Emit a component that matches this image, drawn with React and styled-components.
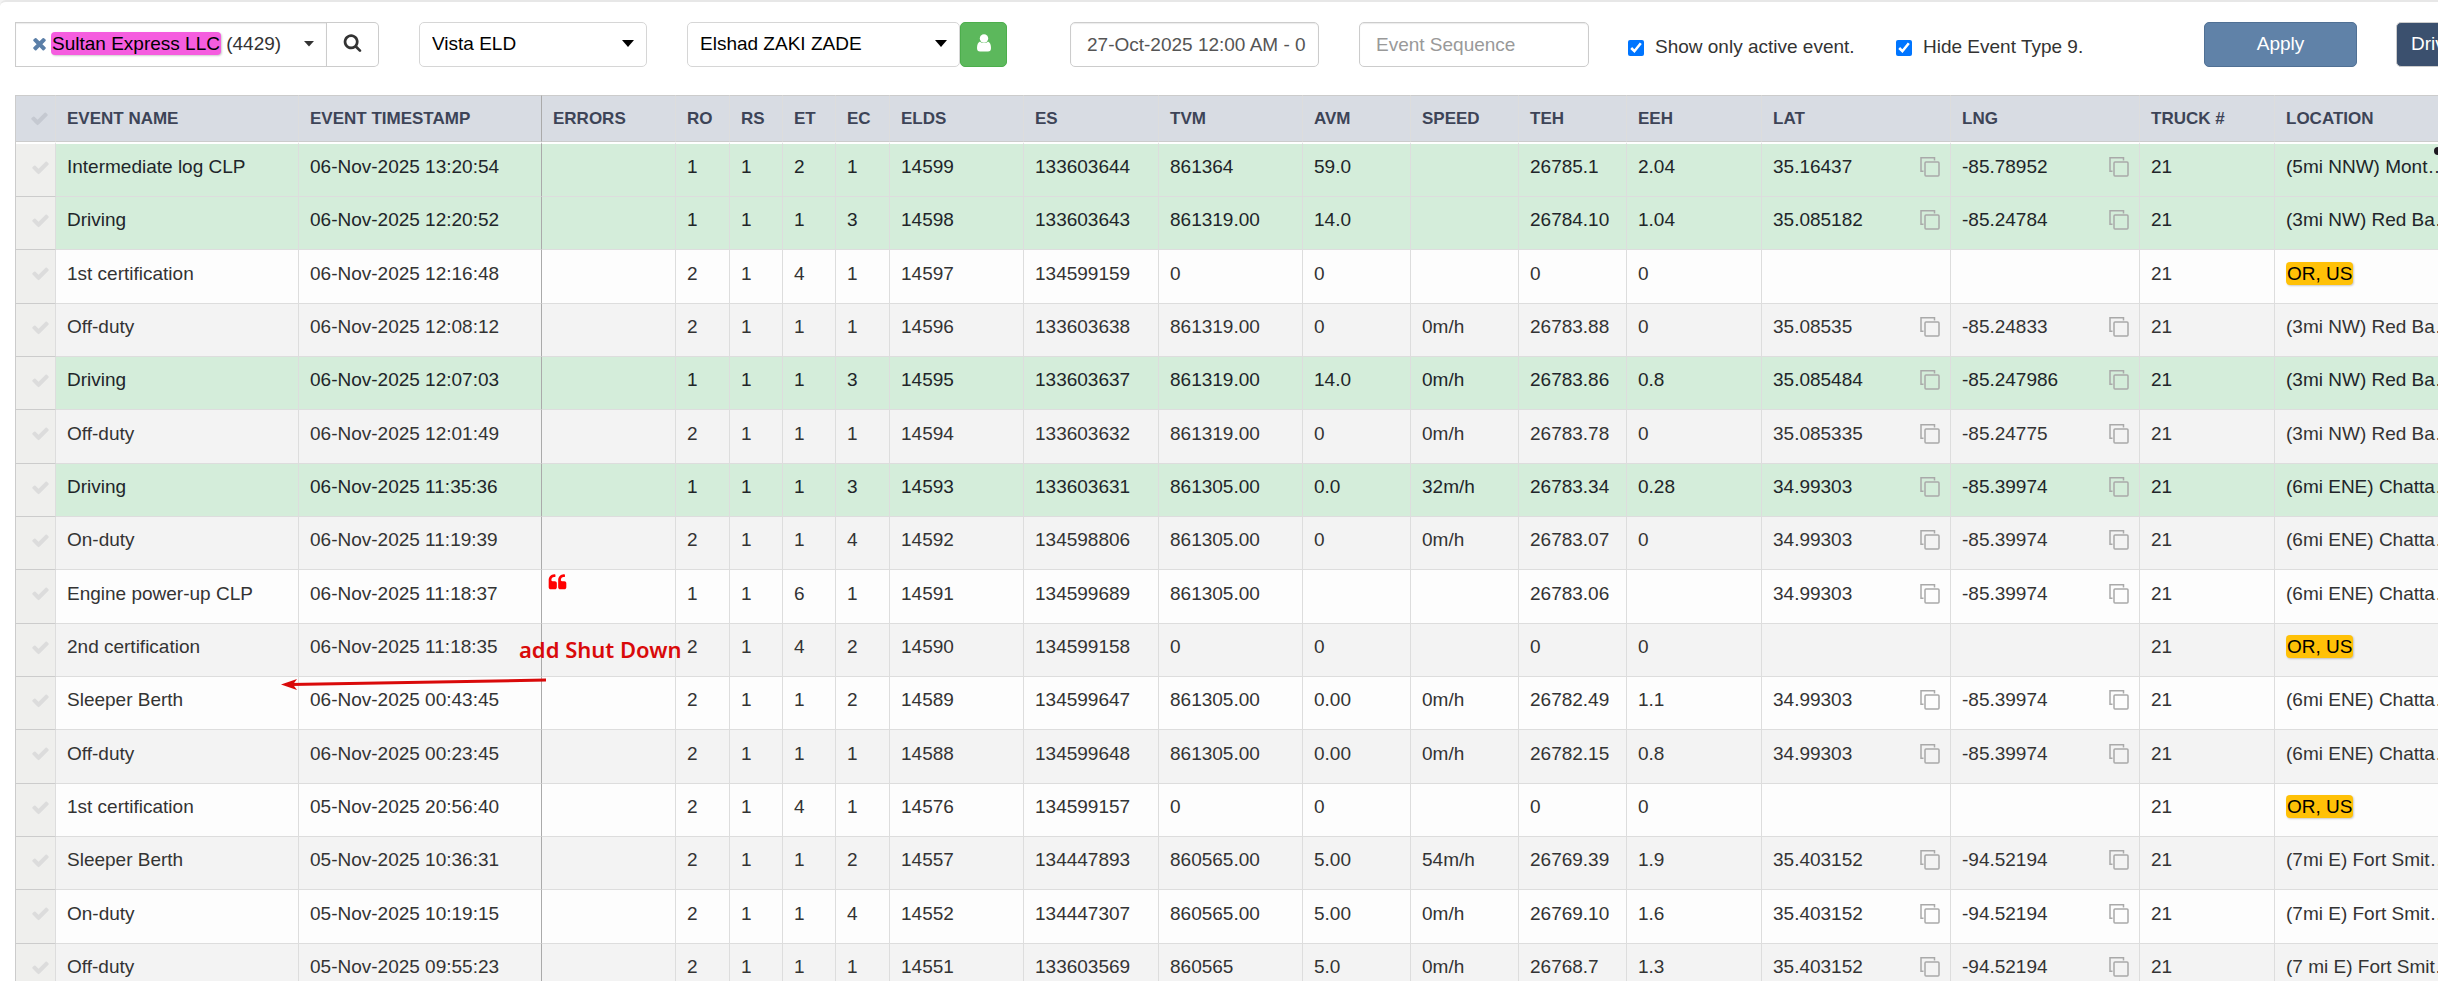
import React, { useState } from "react";
import styled, { createGlobalStyle, css } from "styled-components";

const columns = [
  { key: "name", label: "EVENT NAME", width: 243 },
  { key: "time", label: "EVENT TIMESTAMP", width: 243, divider: true },
  { key: "errors", label: "ERRORS", width: 134 },
  { key: "ro", label: "RO", width: 54 },
  { key: "rs", label: "RS", width: 53 },
  { key: "et", label: "ET", width: 53 },
  { key: "ec", label: "EC", width: 54 },
  { key: "elds", label: "ELDS", width: 134 },
  { key: "es", label: "ES", width: 135 },
  { key: "tvm", label: "TVM", width: 144 },
  { key: "avm", label: "AVM", width: 108 },
  { key: "speed", label: "SPEED", width: 108 },
  { key: "teh", label: "TEH", width: 108 },
  { key: "eeh", label: "EEH", width: 135 },
  { key: "lat", label: "LAT", width: 189, copy: true },
  { key: "lng", label: "LNG", width: 189, copy: true },
  { key: "truck", label: "TRUCK #", width: 135 },
  { key: "location", label: "LOCATION", width: 191 },
];

const CHATTANOOGA = "(6mi ENE) Chattanooga, TN";
const RED_BANK = "(3mi NW) Red Bank, TN";
const FORT_SMITH = "(7mi E) Fort Smith, AR";

const rows = [
  ["Intermediate log CLP", "06-Nov-2025 13:20:54", "", "1", "1", "2", "1", "14599", "133603644", "861364", "59.0", "", "26785.1", "2.04", "35.16437", "-85.78952", "21", "(5mi NNW) Monteagle, TN"],
  ["Driving", "06-Nov-2025 12:20:52", "", "1", "1", "1", "3", "14598", "133603643", "861319.00", "14.0", "", "26784.10", "1.04", "35.085182", "-85.24784", "21", RED_BANK],
  ["1st certification", "06-Nov-2025 12:16:48", "", "2", "1", "4", "1", "14597", "134599159", "0", "0", "", "0", "0", "", "", "21", "OR, US"],
  ["Off-duty", "06-Nov-2025 12:08:12", "", "2", "1", "1", "1", "14596", "133603638", "861319.00", "0", "0m/h", "26783.88", "0", "35.08535", "-85.24833", "21", RED_BANK],
  ["Driving", "06-Nov-2025 12:07:03", "", "1", "1", "1", "3", "14595", "133603637", "861319.00", "14.0", "0m/h", "26783.86", "0.8", "35.085484", "-85.247986", "21", RED_BANK],
  ["Off-duty", "06-Nov-2025 12:01:49", "", "2", "1", "1", "1", "14594", "133603632", "861319.00", "0", "0m/h", "26783.78", "0", "35.085335", "-85.24775", "21", RED_BANK],
  ["Driving", "06-Nov-2025 11:35:36", "", "1", "1", "1", "3", "14593", "133603631", "861305.00", "0.0", "32m/h", "26783.34", "0.28", "34.99303", "-85.39974", "21", CHATTANOOGA],
  ["On-duty", "06-Nov-2025 11:19:39", "", "2", "1", "1", "4", "14592", "134598806", "861305.00", "0", "0m/h", "26783.07", "0", "34.99303", "-85.39974", "21", CHATTANOOGA],
  ["Engine power-up CLP", "06-Nov-2025 11:18:37", "quote", "1", "1", "6", "1", "14591", "134599689", "861305.00", "", "", "26783.06", "", "34.99303", "-85.39974", "21", CHATTANOOGA],
  ["2nd certification", "06-Nov-2025 11:18:35", "", "2", "1", "4", "2", "14590", "134599158", "0", "0", "", "0", "0", "", "", "21", "OR, US"],
  ["Sleeper Berth", "06-Nov-2025 00:43:45", "", "2", "1", "1", "2", "14589", "134599647", "861305.00", "0.00", "0m/h", "26782.49", "1.1", "34.99303", "-85.39974", "21", CHATTANOOGA],
  ["Off-duty", "06-Nov-2025 00:23:45", "", "2", "1", "1", "1", "14588", "134599648", "861305.00", "0.00", "0m/h", "26782.15", "0.8", "34.99303", "-85.39974", "21", CHATTANOOGA],
  ["1st certification", "05-Nov-2025 20:56:40", "", "2", "1", "4", "1", "14576", "134599157", "0", "0", "", "0", "0", "", "", "21", "OR, US"],
  ["Sleeper Berth", "05-Nov-2025 10:36:31", "", "2", "1", "1", "2", "14557", "134447893", "860565.00", "5.00", "54m/h", "26769.39", "1.9", "35.403152", "-94.52194", "21", FORT_SMITH],
  ["On-duty", "05-Nov-2025 10:19:15", "", "2", "1", "1", "4", "14552", "134447307", "860565.00", "5.00", "0m/h", "26769.10", "1.6", "35.403152", "-94.52194", "21", FORT_SMITH],
  ["Off-duty", "05-Nov-2025 09:55:23", "", "2", "1", "1", "1", "14551", "133603569", "860565", "5.0", "0m/h", "26768.7", "1.3", "35.403152", "-94.52194", "21", "(7 mi E) Fort Smith, AR"],
];

const isActiveEvent = (row) => row[0] === "Driving" || row[0].startsWith("Intermediate");

const iconPaths = {
  check:
    "M1671 566q0 40-28 68l-724 724-136 136q-28 28-68 28t-68-28l-136-136-362-362q-28-28-28-68t28-68l136-136q28-28 68-28t68 28l294 295 656-657q28-28 68-28t68 28l136 136q28 28 28 68z",
  times:
    "M1490 1322q0 40-28 68l-136 136q-28 28-68 28t-68-28l-294-294-294 294q-28 28-68 28t-68-28l-136-136q-28-28-28-68t28-68l294-294-294-294q-28-28-28-68t28-68l136-136q28-28 68-28t68 28l294 294 294-294q28-28 68-28t68 28l136 136q28 28 28 68t-28 68l-294 294 294 294q28 28 28 68z",
  search:
    "M1216 832q0-185-131.5-316.5t-316.5-131.5-316.5 131.5-131.5 316.5 131.5 316.5 316.5 131.5 316.5-131.5 131.5-316.5zm512 832q0 52-38 90t-90 38q-54 0-90-38l-343-342q-179 124-399 124-143 0-273.5-55.5t-225-150-150-225-55.5-273.5 55.5-273.5 150-225 225-150 273.5-55.5 273.5 55.5 225 150 150 225 55.5 273.5q0 220-124 399l343 343q37 37 37 90z",
  quote:
    "M832 960v384q0 80-56 136t-136 56h-384q-80 0-136-56t-56-136v-704q0-104 40.5-198.5t109.5-163.5 163.5-109.5 198.5-40.5h64q26 0 45 19t19 45v128q0 26-19 45t-45 19h-64q-106 0-181 75t-75 181v32q0 40 28 68t68 28h224q80 0 136 56t56 136zm896 0v384q0 80-56 136t-136 56h-384q-80 0-136-56t-56-136v-704q0-104 40.5-198.5t109.5-163.5 163.5-109.5 198.5-40.5h64q26 0 45 19t19 45v128q0 26-19 45t-45 19h-64q-106 0-181 75t-75 181v32q0 40 28 68t68 28h224q80 0 136 56t56 136z",
};

const Icon = ({ name, color = "currentColor" }) => (
  <svg width="19" height="19" viewBox="0 0 1792 1792" fill={color} aria-hidden="true">
    <path d={iconPaths[name]} />
  </svg>
);

const CaretIcon = () => (
  <svg width="10" height="6" viewBox="0 0 10 6" aria-hidden="true">
    <path d="M0 0H10L5 5.500Z" fill="#333" />
  </svg>
);

const CopyIcon = () => (
  <svg width="20" height="20" viewBox="0 0 20 20" fill="none" stroke="#a9a9a9" strokeWidth="1.5">
    <path d="M3.5 14.2H1V0.8H14.5V3.5" />
    <rect x="5" y="5" width="14" height="14" rx="1" />
  </svg>
);

const UserIcon = () => (
  <svg width="16" height="18" viewBox="0 0 16 18" fill="#fff">
    <circle cx="8" cy="4.5" r="4.2" />
    <path d="M4 7.5C2 8.5 1 10.500 1 14C1 16.500 2 17.500 4 17.500H12C14 17.500 15 16.500 15 14C15 10.500 14 8.500 12 7.500C10 9.500 6 9.500 4 7.500Z" />
  </svg>
);

const EventCell = ({ column, value }) => {
  if (column.key === "errors") {
    return value ? (
      <ErrorMark>
        <Icon name="quote" />
      </ErrorMark>
    ) : null;
  }
  if (column.copy && value) {
    return (
      <Coordinate>
        {value}
        <CopyButton type="button" aria-label={`Copy ${column.label}`}>
          <CopyIcon />
        </CopyButton>
      </Coordinate>
    );
  }
  if (value === "OR, US") {
    return <Tag $color="#ffc107">{value}</Tag>;
  }
  return value;
};

const App = () => {
  const [onlyActive, setOnlyActive] = useState(true);
  const [hideType, setHideType] = useState(true);
  const [range, setRange] = useState("27-Oct-2025 12:00 AM - 0");
  const [sequence, setSequence] = useState("");

  return (
    <>
      <GlobalStyle />
      <Page>
        <Toolbar>
          <CompanyGroup>
            <CompanyButton type="button">
              <Icon name="times" color="#5b7fa8" />
              <span>
                <Tag $color="#f55ddf">Sultan Express LLC</Tag> (4429)
              </span>
              <CaretIcon />
            </CompanyButton>
            <SearchButton type="button" aria-label="Search">
              <Icon name="search" />
            </SearchButton>
          </CompanyGroup>

          <SelectWrap $width={228}>
            <Select aria-label="Provider" defaultValue="Vista ELD">
              <option>Vista ELD</option>
            </Select>
            <Arrow />
          </SelectWrap>

          <DriverGroup>
            <SelectWrap $width={273}>
              <Select aria-label="Driver" defaultValue="Elshad ZAKI ZADE">
                <option>Elshad ZAKI ZADE</option>
              </Select>
              <Arrow />
            </SelectWrap>
            <UserButton type="button" aria-label="Driver profile">
              <UserIcon />
            </UserButton>
          </DriverGroup>

          <TextInput
            $width={249}
            $gap={63}
            aria-label="Date range"
            value={range}
            onChange={(event) => setRange(event.currentTarget.value)}
          />
          <TextInput
            $width={230}
            $gap={40}
            placeholder="Event Sequence"
            aria-label="Event Sequence"
            value={sequence}
            onChange={(event) => setSequence(event.currentTarget.value)}
          />

          <CheckLabel $width={268}>
            <input type="checkbox" checked={onlyActive} onChange={() => setOnlyActive(!onlyActive)} />
            Show only active event.
          </CheckLabel>
          <CheckLabel $width={308}>
            <input type="checkbox" checked={hideType} onChange={() => setHideType(!hideType)} />
            Hide Event Type 9.
          </CheckLabel>

          <ApplyButton type="button">Apply</ApplyButton>
          <DriverButton type="button">Driver</DriverButton>
        </Toolbar>

        <TableArea>
          <Table>
            <colgroup>
              <Col $width={40} />
              {columns.map((column) => (
                <Col key={column.key} $width={column.width} />
              ))}
            </colgroup>
            <thead>
              <tr>
                <HeadCell>
                  <Icon name="check" />
                </HeadCell>
                {columns.map((column) => (
                  <HeadCell key={column.key} $divider={column.divider}>
                    {column.label}
                  </HeadCell>
                ))}
              </tr>
            </thead>
            <tbody>
              {rows.map((row) => (
                <Row key={row[7]} $active={isActiveEvent(row)}>
                  <CheckCell>
                    <Icon name="check" />
                  </CheckCell>
                  {columns.map((column, i) => (
                    <Cell key={column.key} $divider={column.divider}>
                      <EventCell column={column} value={row[i]} />
                    </Cell>
                  ))}
                </Row>
              ))}
            </tbody>
          </Table>

          <Note>add Shut Down</Note>
          <NoteArrow width="268" height="14" viewBox="0 0 268 14">
            <path d="M10 7.500L265 3" stroke="#d90a0a" strokeWidth="3" />
            <path d="M0 7.500L16 2L12 7.500L16 13Z" fill="#d90a0a" />
          </NoteArrow>
          <Dot />
        </TableArea>
      </Page>
    </>
  );
};

export default App;

const GlobalStyle = createGlobalStyle`
  * {
    box-sizing: border-box;
  }
  body {
    margin: 0;
    background: #f3f3f3;
    color: #333;
    font: 19px/24px "Liberation Sans", Arial, sans-serif;
  }
  button, input, select {
    font: inherit;
    color: inherit;
  }
`;

const Page = styled.main`
  height: 100vh;
  overflow: hidden;
  background: #fff;
  border-top: 2px solid #e7e7e7;
  border-radius: 6px 0 0 0;
`;

const Toolbar = styled.div`
  display: flex;
  align-items: flex-start;
  padding: 20px 0 28px 15px;

  > * {
    flex-shrink: 0;
  }
`;

const Tag = styled.span`
  display: inline-block;
  padding: 0 1px;
  line-height: 23px;
  color: #000;
  background: ${(props) => props.$color};
  border-radius: 4px;
  box-shadow: 1px 1px 2px rgba(0, 0, 0, 0.2);
`;

const CompanyGroup = styled.div`
  display: flex;
  width: 364px;
  height: 45px;
  margin-right: 40px;
`;

const CompanyButton = styled.button`
  display: flex;
  flex: 1;
  align-items: center;
  gap: 2px;
  padding: 0 12px 2px 14px;
  background: #fff;
  border: 1px solid #ccc;
  box-shadow: inset 0 1px 1px rgba(0, 0, 0, 0.08);

  svg:last-child {
    margin-left: auto;
  }
`;

const SearchButton = styled.button`
  width: 52px;
  padding: 2px 0 0;
  background: #fff;
  border: 1px solid #ccc;
  border-left: 0;
  border-radius: 0 5px 5px 0;
`;

const DriverGroup = styled.div`
  display: flex;
  margin-left: 40px;
`;

const SelectWrap = styled.div`
  position: relative;
  width: ${(props) => props.$width}px;
`;

const Select = styled.select`
  width: 100%;
  height: 45px;
  padding: 0 32px 2px 12px;
  color: #000;
  background: #fff;
  border: 1px solid #d6d6d6;
  border-radius: 5px;
  appearance: none;
`;

const Arrow = styled.span`
  position: absolute;
  top: 18px;
  right: 13px;
  border: 6px solid transparent;
  border-top: 7px solid #000;
  border-bottom: 0;
  pointer-events: none;
`;

const UserButton = styled.button`
  width: 47px;
  height: 45px;
  padding: 2px 0 0;
  background: #5cb85c;
  border: 1px solid #4cae4c;
  border-radius: 5px;
`;

const TextInput = styled.input`
  width: ${(props) => props.$width}px;
  height: 45px;
  margin-left: ${(props) => props.$gap}px;
  padding: 0 10px 0 16px;
  color: #555;
  background: #fff;
  border: 1px solid #ccc;
  border-radius: 5px;
  box-shadow: inset 0 1px 1px rgba(0, 0, 0, 0.08);

  &::placeholder {
    color: #999;
  }
`;

const CheckLabel = styled.label`
  display: flex;
  align-items: center;
  width: ${(props) => props.$width}px;
  padding-top: 13px;

  &:first-of-type {
    margin-left: 39px;
  }

  input {
    width: 16px;
    height: 16px;
    margin: 2px 11px 0 0;
    accent-color: #0075ff;
  }
`;

const ApplyButton = styled.button`
  width: 153px;
  height: 45px;
  padding: 0 0 2px;
  color: #fff;
  background: #6082a8;
  border: 1px solid #507094;
  border-radius: 5px;
`;

const DriverButton = styled(ApplyButton)`
  width: auto;
  margin-left: 39px;
  padding: 0 14px 2px;
  background: #3b506e;
  border-color: #ccc;
`;

const TableArea = styled.section`
  position: relative;
  margin-left: 15px;
  overflow: hidden;
`;

const Table = styled.table`
  width: 100%;
  min-width: 2451px;
  table-layout: fixed;
  border-collapse: separate;
  border-spacing: 0;
  border-left: 1px solid #ccc;
`;

const Col = styled.col`
  width: ${(props) => props.$width}px;
`;

const cellBorders = css`
  border-right: 1px solid ${(props) => (props.$divider ? "#aaa" : "#ddd")};
  border-bottom: 1px solid #ddd;
`;

const HeadCell = styled.th`
  height: 47px;
  padding: 0 10px 0 11px;
  color: #3d4457;
  font-size: 17px;
  text-align: left;
  white-space: nowrap;
  background: #d8dce3;
  ${cellBorders}
  border-top: 1px solid #ccc;
  border-bottom-color: #ccc;

  svg {
    display: block;
    margin-left: 3px;
    color: #c5c9d1;
  }
`;

const Row = styled.tr`
  height: 53px;
  color: ${(props) => (props.$active ? "#212529" : "#333")};
  background: ${(props) => (props.$active ? "#d4edda" : "#fdfdfd")};

  &:nth-child(even) {
    background: ${(props) => (props.$active ? "#d4edda" : "#f3f3f3")};
  }
  &:nth-child(3n) {
    height: 54px;
  }
  &:first-child {
    height: 55px;
  }
  &:first-child td {
    border-top: 2px solid #fff;
  }
`;

const Cell = styled.td`
  padding: 0 10px 6px 11px;
  overflow: hidden;
  white-space: nowrap;
  text-overflow: ellipsis;
  ${cellBorders}
`;

const CheckCell = styled(Cell)`
  padding-right: 0;
  color: #dcdcdc;
  background: #efefed;
  border-bottom-color: #ccc;

  svg {
    display: block;
    margin-left: 4px;
  }
`;

const Coordinate = styled.div`
  display: flex;
  align-items: center;
  justify-content: space-between;
`;

const CopyButton = styled.button`
  display: flex;
  padding: 0;
  background: none;
  border: 0;
`;

const ErrorMark = styled.span`
  display: flex;
  margin-left: -5px;
  padding-bottom: 22px;
  color: #f00;
`;

const Note = styled.span`
  position: absolute;
  top: 540px;
  left: 504px;
  color: #d90a0a;
  font: 600 22px/28px "Noto Sans", sans-serif;
`;

const NoteArrow = styled.svg`
  position: absolute;
  top: 582px;
  left: 266px;
`;

const Dot = styled.span`
  position: absolute;
  top: 52px;
  right: -4px;
  width: 8px;
  height: 8px;
  background: #1d1720;
  border-radius: 50%;
`;
